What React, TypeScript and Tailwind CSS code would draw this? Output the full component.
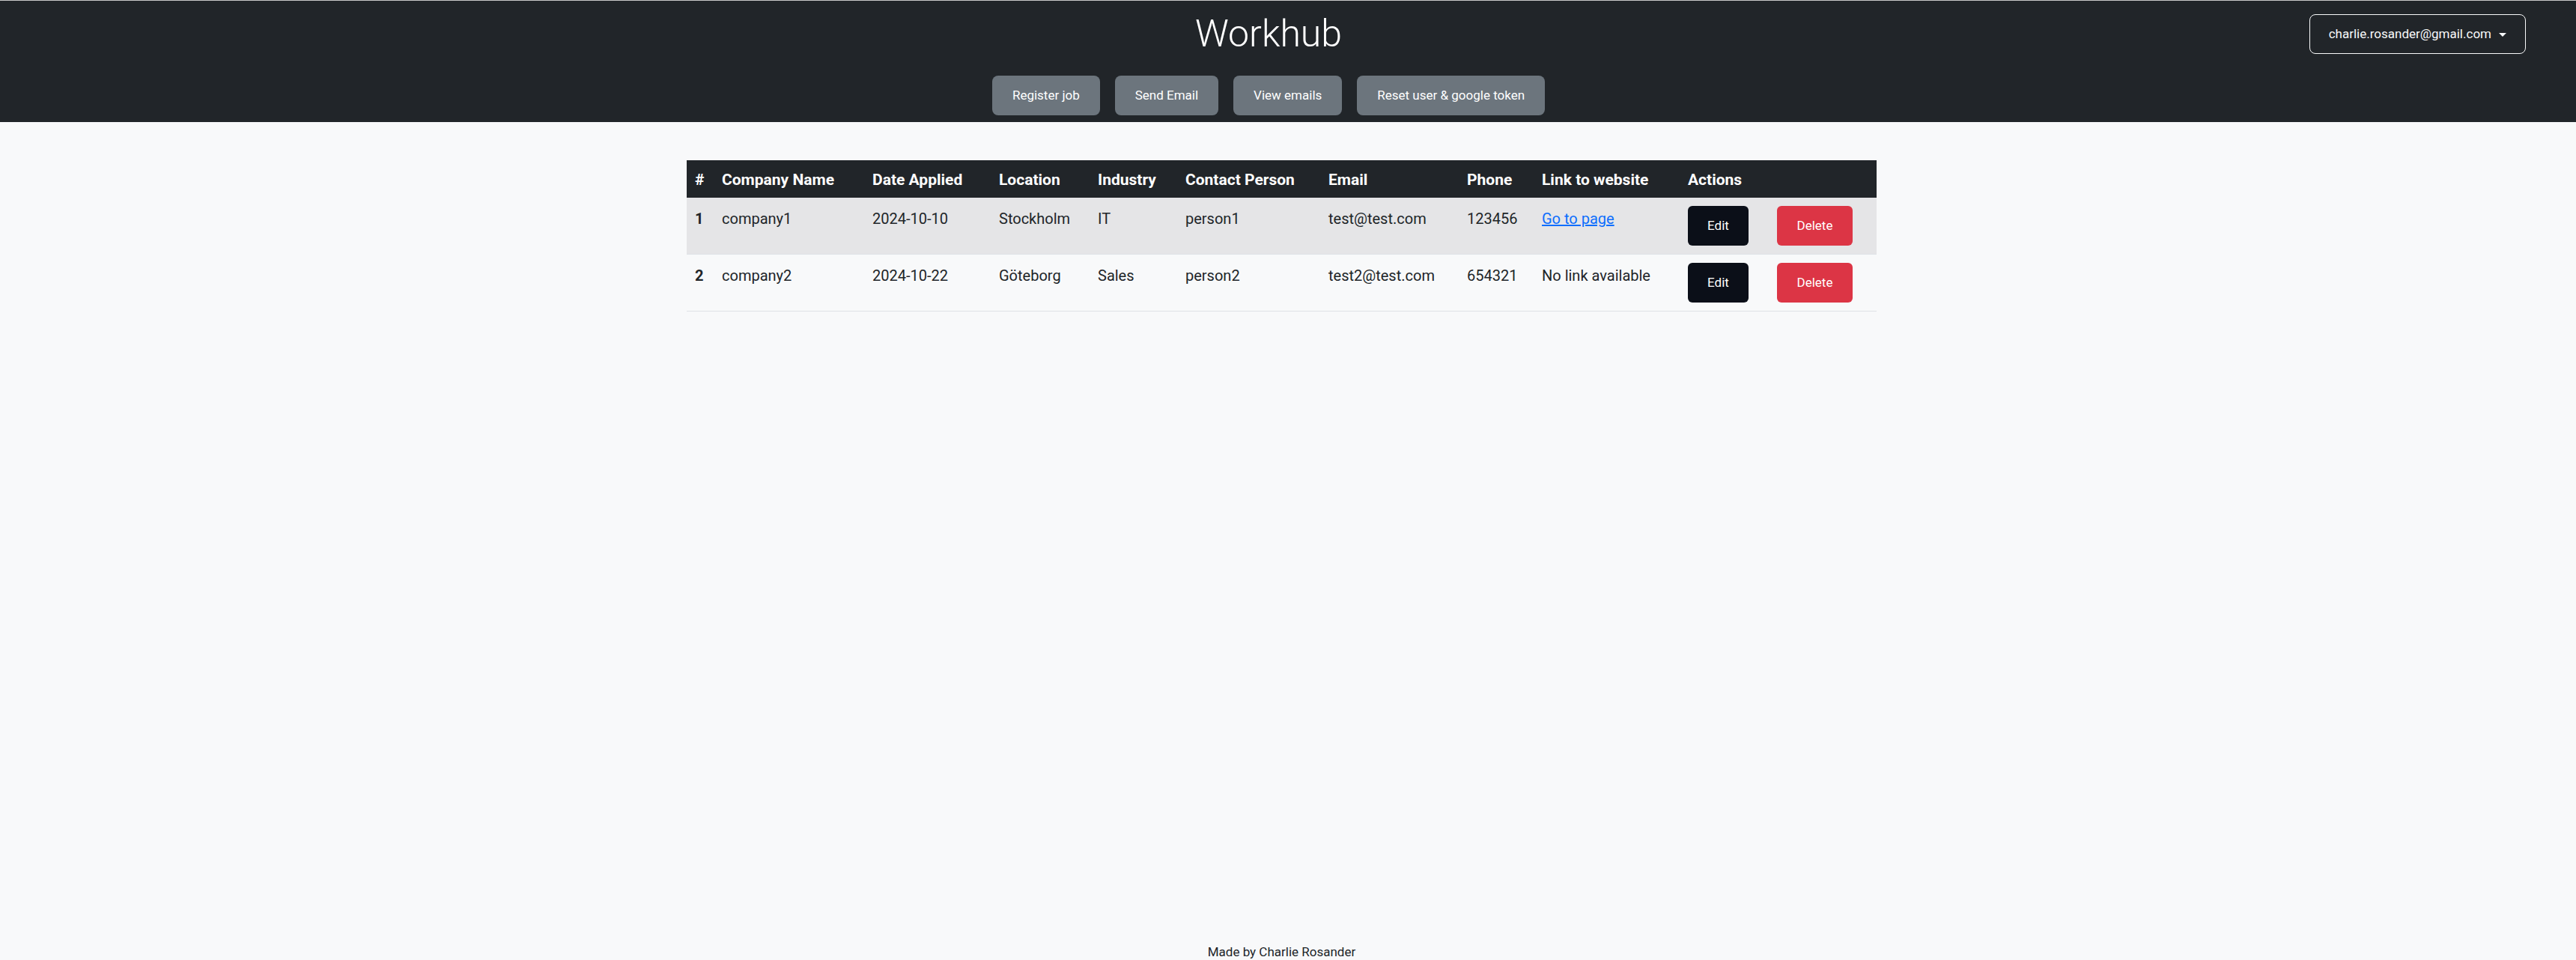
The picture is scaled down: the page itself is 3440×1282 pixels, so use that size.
import React from "react";

type Job = {
  id: number;
  company: string;
  date: string;
  location: string;
  industry: string;
  contact: string;
  email: string;
  phone: string;
  link?: string;
};

const JOBS: Job[] = [
  {
    id: 1,
    company: "company1",
    date: "2024-10-10",
    location: "Stockholm",
    industry: "IT",
    contact: "person1",
    email: "test@test.com",
    phone: "123456",
    link: "#",
  },
  {
    id: 2,
    company: "company2",
    date: "2024-10-22",
    location: "Göteborg",
    industry: "Sales",
    contact: "person2",
    email: "test2@test.com",
    phone: "654321",
  },
];

const NAV_BUTTONS = ["Register job", "Send Email", "View emails", "Reset user & google token"];

const COLUMNS = [
  { label: "#", width: "w-[36px]" },
  { label: "Company Name", width: "w-[201px]" },
  { label: "Date Applied", width: "w-[169px]" },
  { label: "Location", width: "w-[132px]" },
  { label: "Industry", width: "w-[117px]" },
  { label: "Contact Person", width: "w-[191px]" },
  { label: "Email", width: "w-[185px]" },
  { label: "Phone", width: "w-[100px]" },
  { label: "Link to website", width: "w-[195px]" },
  { label: "Actions", width: "w-[119px]" },
  { label: "", width: "w-[144px]" },
];

function Header() {
  return (
    <header className="border-t border-[#c9c9c9] bg-[#212529] pl-[15px] pr-[67px] pt-[14px] pb-[9px]">
      <div className="grid grid-cols-[1fr_auto_1fr]">
        <div />
        <h1 className="text-[50px] font-light leading-[60px] text-white">Workhub</h1>
        <div className="flex justify-end">
          <button
            type="button"
            className="mt-[4px] flex h-[53px] items-center gap-[10px] rounded-[8px] border border-[#f8f9fa] px-[25px] text-[17px] text-[#f8f9fa]"
          >
            charlie.rosander@gmail.com
            <span className="mt-[1px] h-0 w-0 border-x-[5px] border-t-[5px] border-x-transparent border-t-[#f8f9fa]" />
          </button>
        </div>
        <div className="col-span-3 mt-[26px] flex justify-center gap-[20px]">
          {NAV_BUTTONS.map((label) => (
            <button
              key={label}
              type="button"
              className="h-[53px] rounded-[8px] bg-[#6c757d] px-[27px] text-[17px] text-white"
            >
              {label}
            </button>
          ))}
        </div>
      </div>
    </header>
  );
}

function JobTable() {
  return (
    <table className="mx-auto w-[1589px] table-fixed border-collapse text-left text-[20px] text-[#212529]">
      <thead>
        <tr className="bg-[#212529] text-white">
          {COLUMNS.map((col, i) => (
            <th
              key={i}
              className={`${col.width} px-[11px] pt-[12px] pb-[10px] text-[21px] font-bold leading-[28px]`}
            >
              {col.label}
            </th>
          ))}
        </tr>
      </thead>
      <tbody>
        {JOBS.map((job, i) => (
          <tr
            key={job.id}
            className={`border-b border-[#dee2e6] align-top ${i % 2 === 0 ? "bg-[#e5e5e7]" : "bg-[#f8f9fa]"}`}
          >
            <th className="px-[11px] py-[11px] font-bold leading-[34px]">{job.id}</th>
            <td className="px-[11px] py-[11px] leading-[34px]">{job.company}</td>
            <td className="px-[11px] py-[11px] leading-[34px]">{job.date}</td>
            <td className="px-[11px] py-[11px] leading-[34px]">{job.location}</td>
            <td className="px-[11px] py-[11px] leading-[34px]">{job.industry}</td>
            <td className="px-[11px] py-[11px] leading-[34px]">{job.contact}</td>
            <td className="px-[11px] py-[11px] leading-[34px]">{job.email}</td>
            <td className="px-[11px] py-[11px] leading-[34px]">{job.phone}</td>
            <td className="px-[11px] py-[11px] leading-[34px]">
              {job.link ? (
                <a href={job.link} className="text-[#0d6efd] underline">
                  Go to page
                </a>
              ) : (
                "No link available"
              )}
            </td>
            <td className="px-[11px] py-[11px]">
              <button
                type="button"
                className="h-[53px] w-[81px] rounded-[6px] bg-[#0b0f18] text-[17px] text-white"
              >
                Edit
              </button>
            </td>
            <td className="px-[11px] py-[11px]">
              <button
                type="button"
                className="h-[53px] w-[101px] rounded-[6px] bg-[#dc3545] text-[17px] text-white"
              >
                Delete
              </button>
            </td>
          </tr>
        ))}
      </tbody>
    </table>
  );
}

export default function App() {
  return (
    <div className="flex min-h-[1503px] flex-col bg-[#f8f9fa] font-[Roboto,'Liberation_Sans',sans-serif]">
      <Header />
      <main className="min-h-[1090px] pt-[51px] pr-[17px]">
        <JobTable />
      </main>
      <footer className="pt-[6px] pr-[17px] pb-[220px] text-center text-[17px] leading-[25px] text-[#212529]">
        Made by Charlie Rosander
      </footer>
    </div>
  );
}
